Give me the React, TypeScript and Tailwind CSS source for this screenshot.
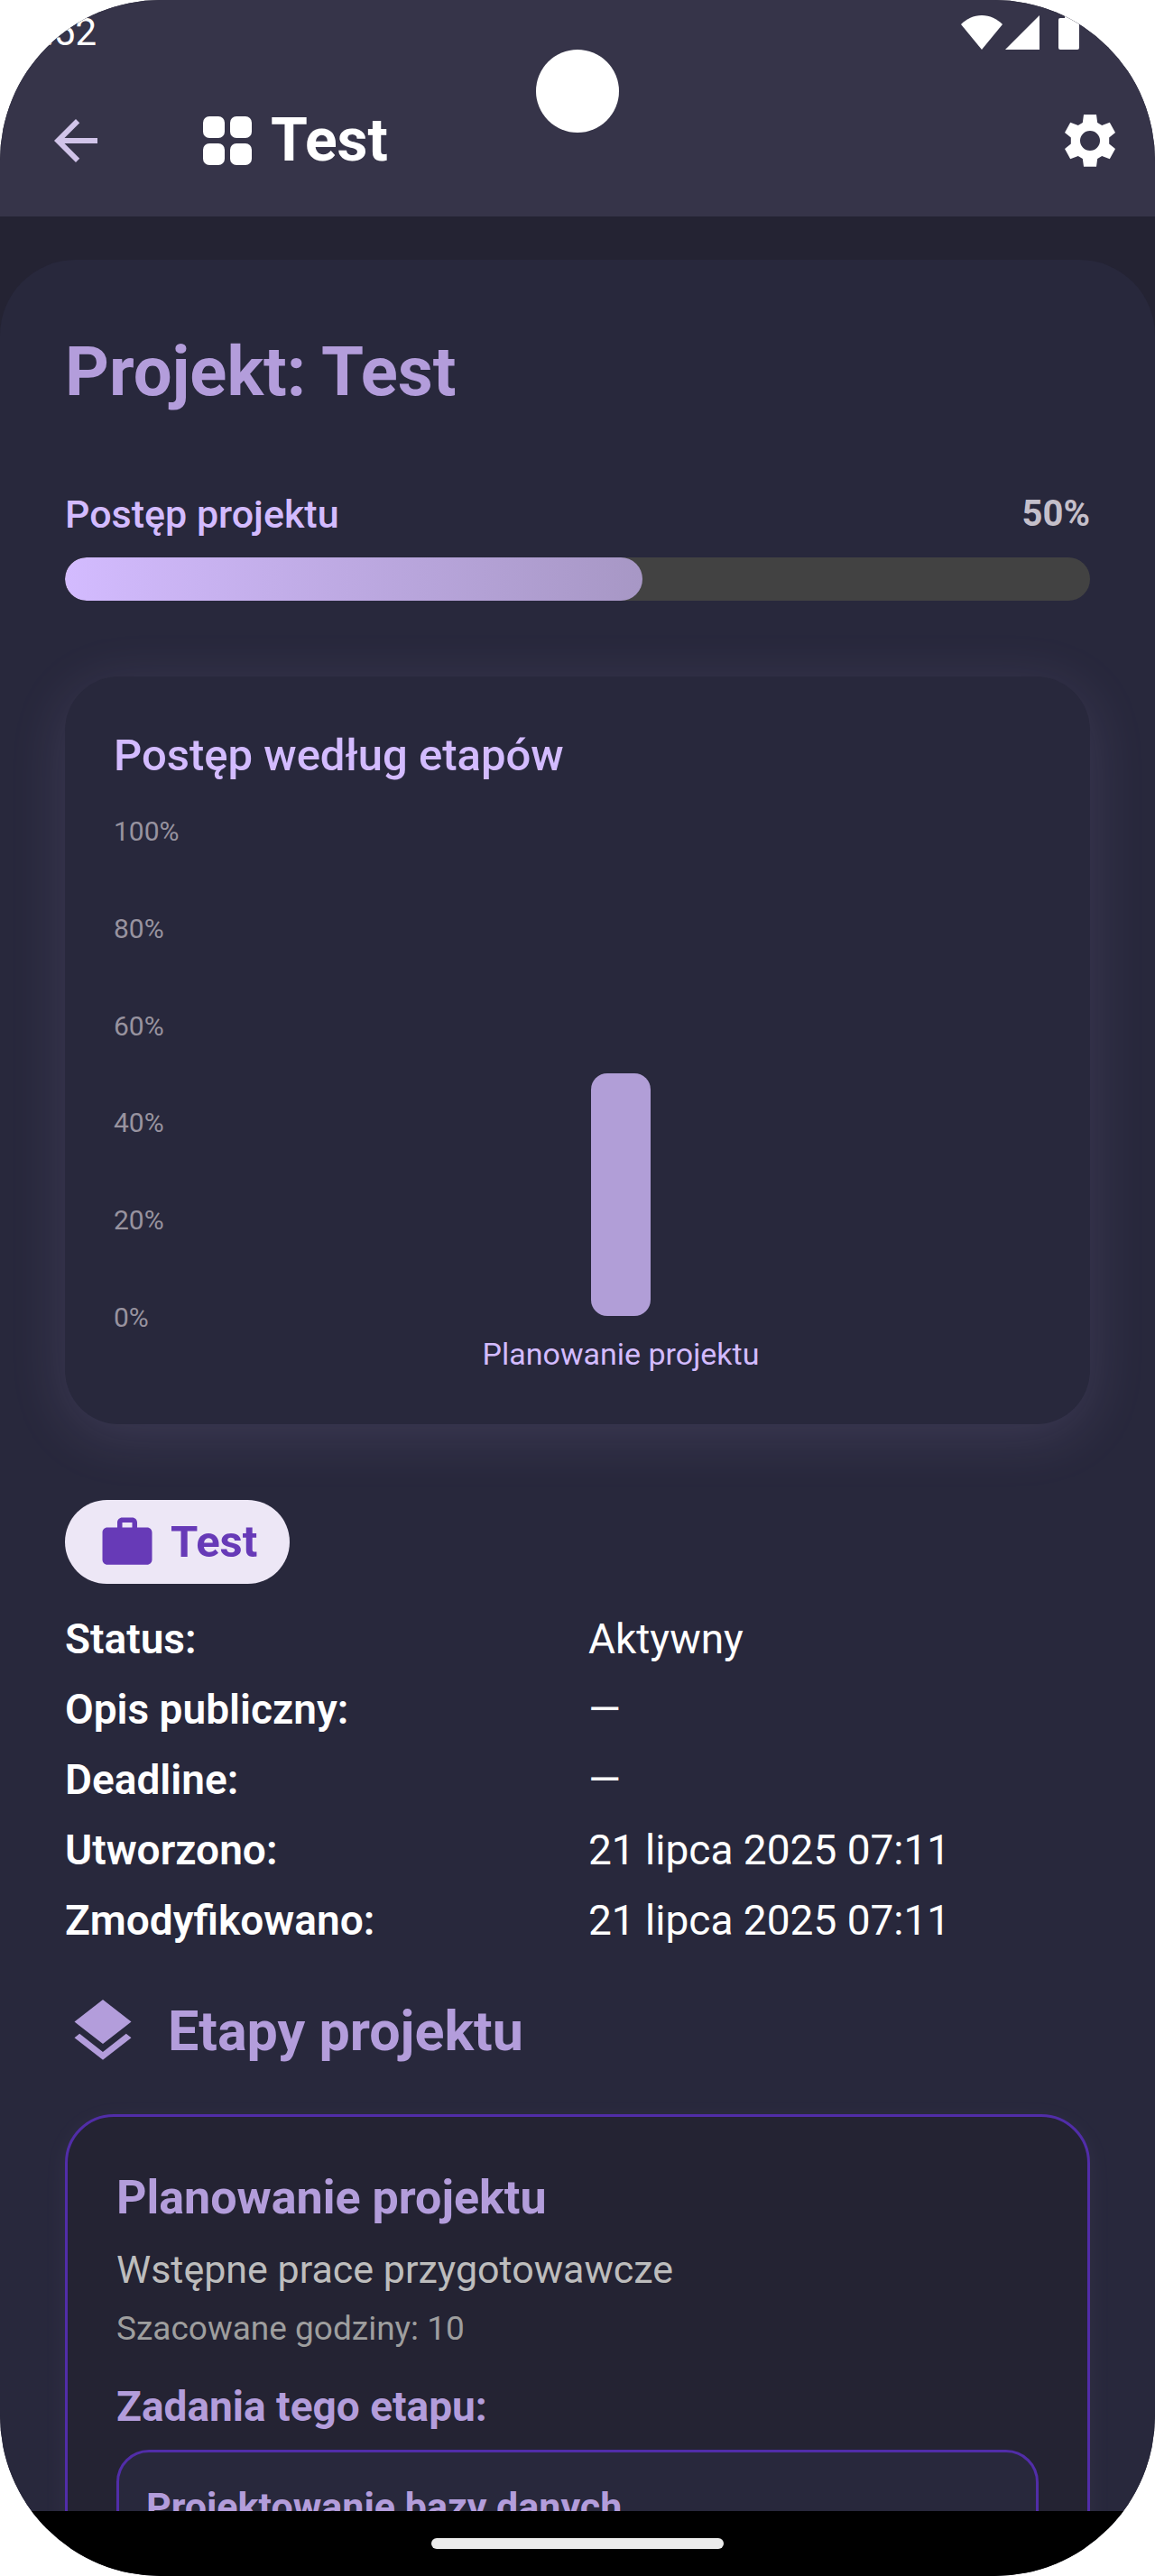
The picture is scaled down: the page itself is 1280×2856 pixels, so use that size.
import { MdArrowBack, MdLayers, MdWork } from "react-icons/md";

const axisLabels = ["100%", "80%", "60%", "40%", "20%", "0%"];

const stages = [{ name: "Planowanie projektu", progress: 50 }];

const details = [
  { label: "Status:", value: "Aktywny" },
  { label: "Opis publiczny:", value: "—" },
  { label: "Deadline:", value: "—" },
  { label: "Utworzono:", value: "21 lipca 2025 07:11" },
  { label: "Zmodyfikowano:", value: "21 lipca 2025 07:11" },
];

function GearIcon() {
  return (
    <svg className="size-[72px]" viewBox="0 0 72 72" fill="currentColor">
      <path
        fillRule="evenodd"
        d="M29 7h14l1.2 9 5 3 8.6-3.2L64 27l-6.8 5.5v7L64 45l-6.2 11.2-8.6-3.2-5 3-1.2 8.8H29L27.800 56l-5-3-8.600 3.200L8 45l6.800-5.500v-7L8 27l6.200-11.200 8.600 3.200 5-3zM36 25a11 11 0 1 0 0 22 11 11 0 1 0 0-22z"
      />
    </svg>
  );
}

function StatusBar() {
  return (
    <div className="flex h-[72px] items-center justify-between pr-[84px] pl-[26px]">
      <span className="text-[42px] leading-[60px]">9:52</span>
      <div className="flex items-center">
        <svg className="h-[38px] w-[46px]" viewBox="0 0 46 38" fill="currentColor">
          <path d="M0 10C6 4 14 0 23 0s17 4 23 10L23 38z" />
        </svg>
        <svg className="ml-[3px] h-[38px] w-[38px]" viewBox="0 0 38 38" fill="currentColor">
          <path d="M38 0v38H0z" />
        </svg>
        <svg className="ml-[21px] h-[40px] w-[23px]" viewBox="0 0 23 40" fill="currentColor">
          <path d="M7 0h9v4h5a2 2 0 0 1 2 2v31a2 2 0 0 1-2 2H2a2 2 0 0 1-2-2V6a2 2 0 0 1 2-2h5z" />
        </svg>
      </div>
    </div>
  );
}

function Header() {
  return (
    <header className="relative bg-[#363449] text-white">
      <StatusBar />
      <div className="flex h-[168px] items-center pr-[36px] pl-[48px]">
        <button type="button" aria-label="Wstecz" className="text-[#d1c4e9]">
          <MdArrowBack className="size-[72px]" />
        </button>
        <div className="ml-[96px] flex flex-1 items-center gap-[12px]">
          <svg className="size-[72px]" viewBox="0 0 72 72" fill="currentColor">
            <rect x="9" y="9" width="24" height="24" rx="7" />
            <rect x="39" y="9" width="24" height="24" rx="7" />
            <rect x="9" y="39" width="24" height="24" rx="7" />
            <rect x="39" y="39" width="24" height="24" rx="7" />
          </svg>
          <span className="text-[66px] leading-[84px] font-bold">Test</span>
        </div>
        <button type="button" aria-label="Ustawienia">
          <GearIcon />
        </button>
      </div>
      {/* camera cutout */}
      <div className="absolute top-[55px] left-1/2 size-[92px] -translate-x-1/2 rounded-full bg-white" />
    </header>
  );
}

function ProjectProgress() {
  return (
    <section className="mt-[76px]">
      <div className="flex items-center justify-between leading-[60px]">
        <span className="text-[43px] font-medium text-[#d3bbff]">
          Postęp projektu
        </span>
        <span className="text-[40px] font-bold text-[#c4bfca]">50%</span>
      </div>
      <div
        role="progressbar"
        aria-label="Postęp projektu"
        aria-valuenow={50}
        className="mt-[18px] h-[48px] overflow-hidden rounded-[24px] bg-[#424242]"
      >
        <div className="h-full w-[50vw] rounded-[24px] bg-linear-to-r from-[#d3bbff] to-[#a797c5]" />
      </div>
    </section>
  );
}

function StageChart() {
  return (
    <section className="mt-[84px] rounded-[60px] bg-[#28283c] p-[54px] shadow-[0_12px_64px_rgba(211,187,255,0.13)]">
      <h2 className="text-[49px] leading-[68px] font-medium text-[#d3bbff]">
        Postęp według etapów
      </h2>
      <div className="mt-[32px] flex">
        <div className="flex h-[575px] w-[96px] flex-col justify-between text-[30px] leading-[36px] text-[#98939f]">
          {axisLabels.map((label) => (
            <span key={label}>{label}</span>
          ))}
        </div>
        <div className="flex flex-1 justify-around">
          {stages.map((stage) => (
            <div key={stage.name} className="flex flex-col items-center">
              <div className="mt-[17px] flex h-[538px] items-end">
                <div
                  className="w-[66px] rounded-[18px] bg-[#b19ed7]"
                  style={{ height: `${stage.progress}%` }}
                />
              </div>
              <span className="mt-[18px] text-[34px] leading-[48px] text-[#d3bbff]">
                {stage.name}
              </span>
            </div>
          ))}
        </div>
      </div>
    </section>
  );
}

function StageCard() {
  return (
    <article className="mt-[50px] rounded-[54px] border-[3px] border-[#512da8] bg-[#242333] px-[54px] py-[60px] shadow-[0_6px_28px_rgba(211,187,255,0.05)]">
      <h3 className="text-[52px] leading-[60px] font-bold text-[#b39ddb]">
        Planowanie projektu
      </h3>
      <p className="mt-[19px] text-[43px] leading-[60px] text-[#bdbdbd]">
        Wstępne prace przygotowawcze
      </p>
      <p className="mt-[12px] text-[37px] leading-[48px] text-[#9e9e9e]">
        Szacowane godziny: 10
      </p>
      <h4 className="mt-[32px] text-[46px] leading-[60px] font-bold text-[#b39ddb]">
        Zadania tego etapu:
      </h4>
      <div className="mt-[18px] rounded-[36px] border-[3px] border-[#512da8] bg-[#28283c] p-[30px]">
        <p className="text-[43px] leading-[60px] font-bold text-[#b39ddb]">
          Projektowanie bazy danych
        </p>
      </div>
    </article>
  );
}

export default function App() {
  return (
    <div className="h-screen bg-white font-['Roboto',sans-serif]">
      <div className="flex h-full flex-col overflow-hidden rounded-[178px] bg-[#242333]">
        <Header />

        <main className="min-h-0 flex-1 overflow-y-auto pt-[48px] [scrollbar-width:none]">
          <div className="rounded-t-[84px] bg-[#28283c] p-[72px]">
            <h1 className="text-[76px] leading-[104px] font-bold text-[#b39ddb]">
              Projekt: Test
            </h1>

            <ProjectProgress />
            <StageChart />

            <div className="mt-[84px] inline-flex items-center gap-[15px] rounded-[48px] bg-[#ede7f6] px-[36px] py-[12px] align-top text-[#673ab7]">
              <MdWork className="size-[66px]" />
              <span className="text-[49px] leading-[69px] font-bold">Test</span>
            </div>

            <dl className="mt-[22px] text-[46px] leading-[78px] text-white">
              {details.map((row) => (
                <div key={row.label} className="grid grid-cols-2 gap-[24px]">
                  <dt className="font-semibold">{row.label}</dt>
                  <dd>{row.value}</dd>
                </div>
              ))}
            </dl>

            <div className="mt-[42px] flex items-center gap-[30px] text-[#b39ddb]">
              <MdLayers className="size-[84px]" />
              <h2 className="text-[61px] leading-[84px] font-bold">
                Etapy projektu
              </h2>
            </div>

            <StageCard />
          </div>
        </main>

        <nav className="flex h-[72px] items-center justify-center bg-black">
          <div className="h-[12px] w-[324px] rounded-full bg-[#ebebeb]" />
        </nav>
      </div>
    </div>
  );
}
